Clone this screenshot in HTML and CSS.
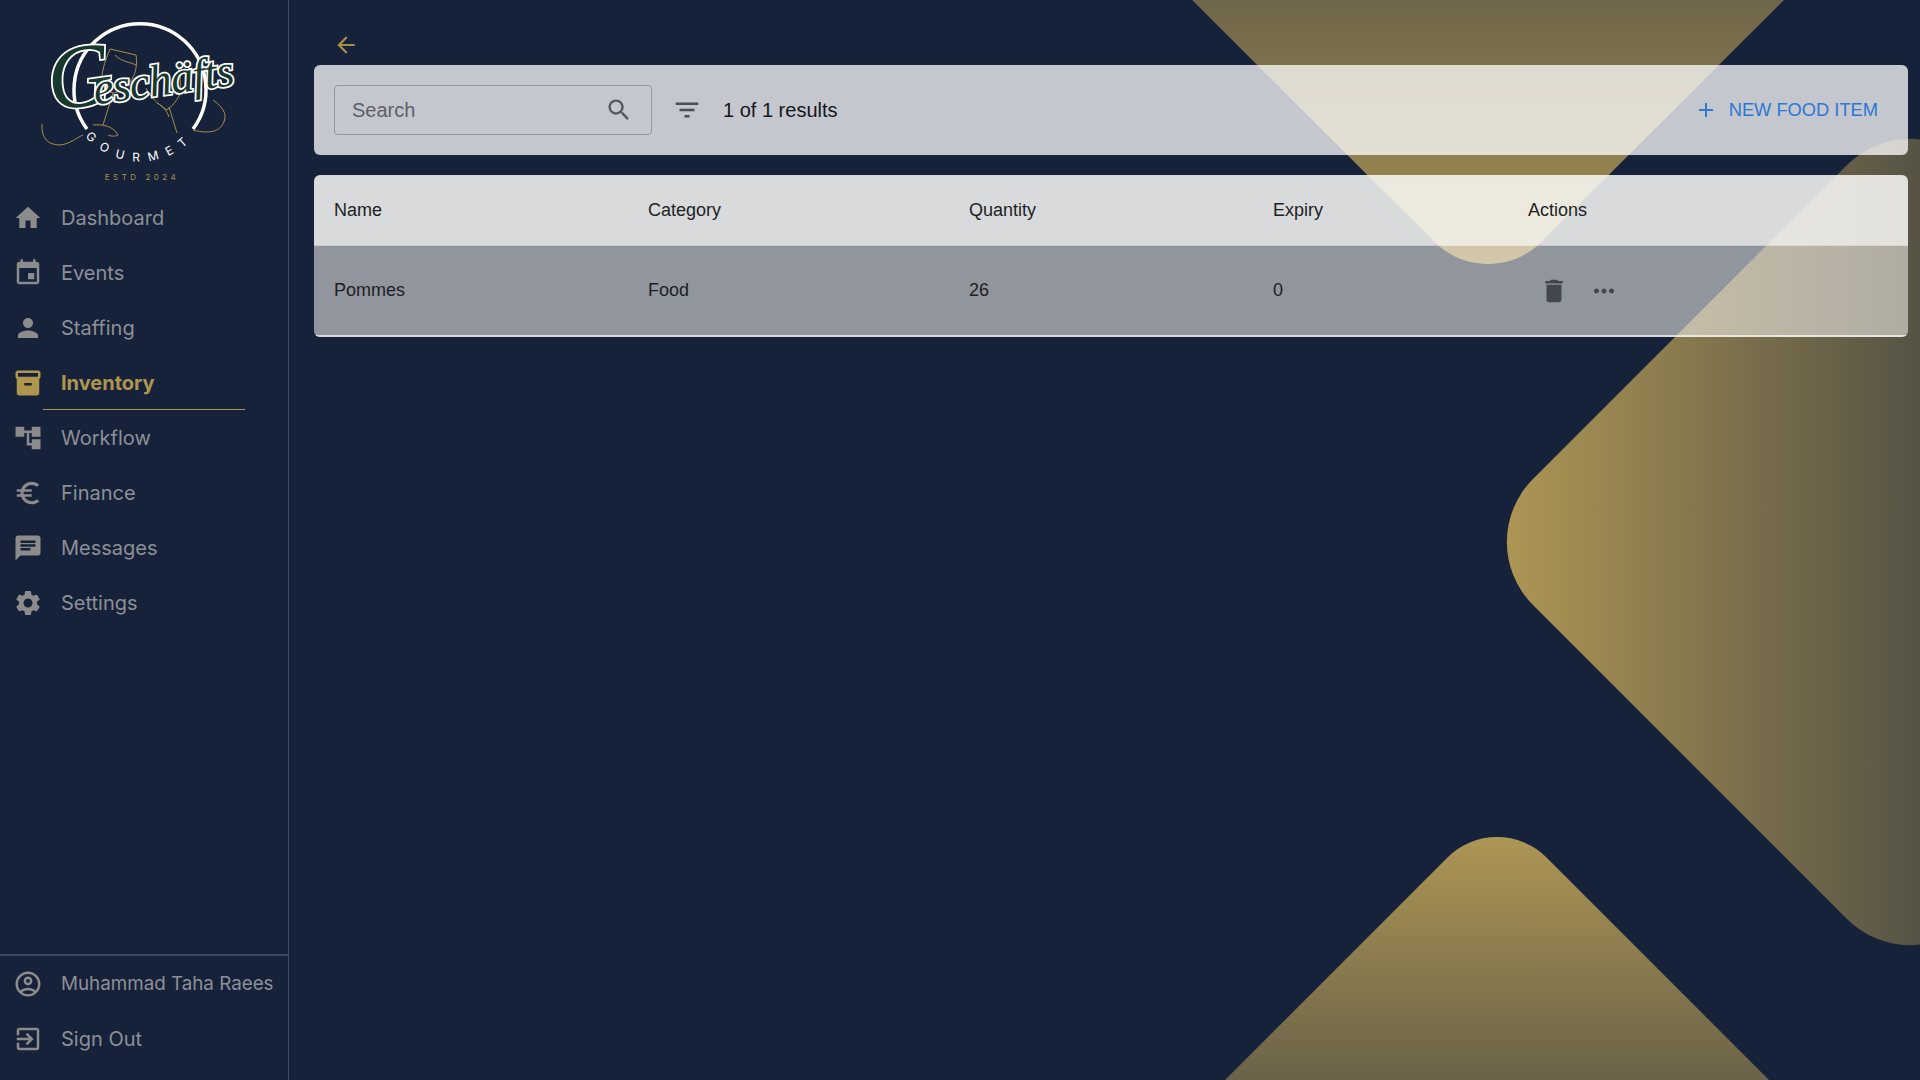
FILE: index.html
```html
<!DOCTYPE html>
<html>
<head>
    <meta charset="UTF-8">
    <link rel="stylesheet" href="styles.css">
</head>
<body>
    <!-- Background shapes -->
    <svg class="backdrop" viewBox="0 0 1920 1080">
        <defs>
            <linearGradient id="fadeTop" gradientUnits="userSpaceOnUse" x1="0" y1="290" x2="0" y2="-420">
                <stop offset="0" stop-color="#ad9554"/>
                <stop offset="1" stop-color="#ad9554" stop-opacity="0"/>
            </linearGradient>
            <linearGradient id="fadeRight" gradientUnits="userSpaceOnUse" x1="1506" y1="0" x2="2230" y2="0">
                <stop offset="0" stop-color="#ad9554"/>
                <stop offset="1" stop-color="#ad9554" stop-opacity="0"/>
            </linearGradient>
            <linearGradient id="fadeBottom" gradientUnits="userSpaceOnUse" x1="0" y1="838" x2="0" y2="1388">
                <stop offset="0" stop-color="#ad9554"/>
                <stop offset="1" stop-color="#ad9554" stop-opacity="0"/>
            </linearGradient>
        </defs>
        <path fill="url(#fadeTop)" d="M1142 -50 L1434 241.5 A76 76 0 0 0 1542 241.5 L1834 -50 Z"/>
        <path fill="url(#fadeRight)" d="M1847 165 L1533 479 A89 89 0 0 0 1533 605 L1847 919 A89 89 0 0 0 1973 919 L2287 605 A89 89 0 0 0 2287 479 L1973 165 A89 89 0 0 0 1847 165 Z"/>
        <path fill="url(#fadeBottom)" d="M1447 858 A70 70 0 0 1 1547 858 L1937 1248 L1057 1248 Z"/>
    </svg>

    <div class="app">
        <aside class="sidebar">
            <div class="logo">
                <svg class="logo-art" viewBox="0 0 288 190">
                    <defs>
                        <path id="gourmetArc" d="M67.5 89 A72.5 72.5 0 0 0 212.5 89"/>
                    </defs>
                    <path class="logo-ring" d="M87 129 A66 66 0 1 1 193 129"/>
                    <!-- glasses -->
                    <path class="logo-line" d="M110 49 L136 55 C139 72 130 90 113 93 C103 90 100 80 103 70 C105 60 108 55 110 49 Z M115 55 C122 62 130 62 136 65 M113 93 L103 125 M93 125 C103 124 113 126 118 135 C114 137 110 136 108 135"/>
                    <path class="logo-line" d="M146 88 C150 97 158 104 167 110 C175 104 181 95 180 90 C181 82 180 75 178 67 M157 103 C163 106 167 111 169 117 M169 107 L177 133"/>
                    <path class="logo-line" d="M42 124 C41 138 48 145 60 145 C70 144 76 138 83 135 M193 130 C204 133 222 135 225 118 C226 110 218 104 213 100"/>
                    <text class="logo-script" x="48" y="98" transform="rotate(-8 140 80)"><tspan class="logo-initial">G</tspan><tspan dx="-20">eschäfts</tspan></text>
                    <text class="logo-gourmet"><textPath href="#gourmetArc" startOffset="50%">GOURMET</textPath></text>
                    <text class="logo-estd" x="142" y="180">ESTD 2024</text>
                </svg>
            </div>
            <nav class="nav">
                <a class="nav-item"><svg class="nav-icon" viewBox="0 0 24 24"><path d="M10 20v-6h4v6h5v-8h3L12 3 2 12h3v8z"/></svg>Dashboard</a>
                <a class="nav-item"><svg class="nav-icon" viewBox="0 0 24 24"><path d="M17 12h-5v5h5v-5zM16 1v2H8V1H6v2H5c-1.11 0-1.99.9-1.99 2L3 19c0 1.1.89 2 2 2h14c1.1 0 2-.9 2-2V5c0-1.1-.9-2-2-2h-1V1h-2zm3 18H5V8h14v11z"/></svg>Events</a>
                <a class="nav-item"><svg class="nav-icon" viewBox="0 0 24 24"><path d="M12 12c2.21 0 4-1.79 4-4s-1.79-4-4-4-4 1.79-4 4 1.79 4 4 4zm0 2c-2.67 0-8 1.34-8 4v2h16v-2c0-2.66-5.33-4-8-4z"/></svg>Staffing</a>
                <a class="nav-item active"><svg class="nav-icon" viewBox="0 0 24 24"><path d="M20 2H4c-1 0-2 .9-2 2v3.01c0 .72.43 1.34 1 1.69V20c0 1.1 1.1 2 2 2h14c.9 0 2-.9 2-2V8.7c.57-.35 1-.97 1-1.69V4c0-1.1-1-2-2-2zm-5 12H9v-2h6v2zm5-7H4V4l16-.02V7z"/></svg>Inventory</a>
                <a class="nav-item"><svg class="nav-icon" viewBox="0 0 24 24"><path d="M22 11V3h-7v3H9V3H2v8h7V8h2v10h4v3h7v-8h-7v3h-2V8h2v3z"/></svg>Workflow</a>
                <a class="nav-item"><svg class="nav-icon" viewBox="0 0 24 24"><path d="M15 18.5c-2.51 0-4.68-1.42-5.76-3.5H15v-2H8.58c-.05-.33-.08-.66-.08-1s.03-.67.08-1H15V9H9.24C10.32 6.92 12.5 5.5 15 5.5c1.61 0 3.09.59 4.23 1.57L21 5.3C19.41 3.87 17.3 3 15 3c-3.92 0-7.24 2.51-8.48 6H3v2h3.06c-.04.33-.06.66-.06 1 0 .34.02.67.06 1H3v2h3.52c1.24 3.49 4.56 6 8.48 6 2.31 0 4.41-.87 6-2.3l-1.78-1.77c-1.13.98-2.6 1.57-4.22 1.57z"/></svg>Finance</a>
                <a class="nav-item"><svg class="nav-icon" viewBox="0 0 24 24"><path d="M20 2H4c-1.1 0-1.99.9-1.99 2L2 22l4-4h14c1.1 0 2-.9 2-2V4c0-1.1-.9-2-2-2zM6 9h12v2H6V9zm8 5H6v-2h8v2zm4-6H6V6h12v2z"/></svg>Messages</a>
                <a class="nav-item"><svg class="nav-icon" viewBox="0 0 24 24"><path d="M19.14 12.94c.04-.3.06-.61.06-.94 0-.32-.02-.64-.07-.94l2.03-1.58c.18-.14.23-.41.12-.61l-1.92-3.32c-.12-.22-.37-.29-.59-.22l-2.39.96c-.5-.38-1.03-.7-1.62-.94l-.36-2.54c-.04-.24-.24-.41-.48-.41h-3.84c-.24 0-.43.17-.47.41l-.36 2.54c-.59.24-1.13.57-1.62.94l-2.39-.96c-.22-.08-.47 0-.59.22L2.74 8.87c-.12.21-.08.47.12.61l2.03 1.58c-.05.3-.09.63-.09.94s.02.64.07.94l-2.03 1.58c-.18.14-.23.41-.12.61l1.92 3.32c.12.22.37.29.59.22l2.39-.96c.5.38 1.03.7 1.62.94l.36 2.54c.05.24.24.41.48.41h3.84c.24 0 .44-.17.47-.41l.36-2.54c.59-.24 1.13-.56 1.62-.94l2.39.96c.22.08.47 0 .59-.22l1.92-3.32c.12-.22.07-.47-.12-.61l-2.01-1.58zM12 15.6c-1.98 0-3.6-1.62-3.6-3.6s1.62-3.6 3.6-3.6 3.6 1.62 3.6 3.6-1.62 3.6-3.6 3.6z"/></svg>Settings</a>
            </nav>
            <div class="account">
                <a class="nav-item account-name"><svg class="nav-icon" viewBox="0 0 24 24"><path d="M12 2C6.48 2 2 6.48 2 12s4.48 10 10 10 10-4.48 10-10S17.52 2 12 2zM7.35 18.5C8.66 17.56 10.26 17 12 17s3.34.56 4.65 1.5c-1.31.94-2.91 1.5-4.65 1.5s-3.34-.56-4.65-1.5zm10.79-1.38C16.45 15.8 14.32 15 12 15s-4.45.8-6.14 2.12C4.7 15.73 4 13.95 4 12c0-4.42 3.58-8 8-8s8 3.58 8 8c0 1.95-.7 3.73-1.86 5.12zM12 6c-1.93 0-3.5 1.57-3.5 3.5S10.07 13 12 13s3.5-1.57 3.5-3.5S13.93 6 12 6zm0 5c-.83 0-1.5-.67-1.5-1.5S11.17 8 12 8s1.5.67 1.5 1.5S12.83 11 12 11z"/></svg>Muhammad Taha Raees</a>
                <a class="nav-item"><svg class="nav-icon" viewBox="0 0 24 24"><path d="M10.09 15.59L11.5 17l5-5-5-5-1.41 1.41L12.67 11H3v2h9.67l-2.58 2.59zM19 3H5c-1.11 0-2 .9-2 2v4h2V5h14v14H5v-4H3v4c0 1.1.89 2 2 2h14c1.1 0 2-.9 2-2V5c0-1.1-.9-2-2-2z"/></svg>Sign Out</a>
            </div>
        </aside>

        <main class="content">
            <div class="back-row">
                <svg class="back-icon" viewBox="0 0 24 24"><path d="M20 11H7.83l5.59-5.59L12 4l-8 8 8 8 1.41-1.41L7.83 13H20v-2z"/></svg>
            </div>

            <div class="toolbar">
                <div class="search">
                    <span class="search-label">Search</span>
                    <svg class="search-icon" viewBox="0 0 24 24"><path d="M15.5 14h-.79l-.28-.27C15.41 12.59 16 11.11 16 9.5 16 5.91 13.09 3 9.5 3S3 5.91 3 9.5 5.91 16 9.5 16c1.61 0 3.09-.59 4.23-1.57l.27.28v.79l5 4.99L20.49 19l-4.99-5zm-6 0C7.01 14 5 11.99 5 9.5S7.01 5 9.5 5 14 7.01 14 9.5 11.99 14 9.5 14z"/></svg>
                </div>
                <svg class="filter-icon" viewBox="0 0 24 24"><path d="M10 18h4v-2h-4v2zM3 6v2h18V6H3zm3 7h12v-2H6v2z"/></svg>
                <span class="results">1 of 1 results</span>
                <a class="new-item">
                    <svg class="add-icon" viewBox="0 0 24 24"><path d="M19 13h-6v6h-2v-6H5v-2h6V5h2v6h6v2z"/></svg>
                    NEW FOOD ITEM
                </a>
            </div>

            <div class="table">
                <div class="table-head">
                    <div>Name</div>
                    <div>Category</div>
                    <div>Quantity</div>
                    <div>Expiry</div>
                    <div>Actions</div>
                </div>
                <div class="table-row">
                    <div>Pommes</div>
                    <div>Food</div>
                    <div>26</div>
                    <div>0</div>
                    <div class="row-actions">
                        <svg class="row-icon" viewBox="0 0 24 24"><path d="M6 19c0 1.1.9 2 2 2h8c1.1 0 2-.9 2-2V7H6v12zM19 4h-3.5l-1-1h-5l-1 1H5v2h14V4z"/></svg>
                        <svg class="row-icon" viewBox="0 0 24 24"><path d="M6 10c-1.1 0-2 .9-2 2s.9 2 2 2 2-.9 2-2-.9-2-2-2zm12 0c-1.1 0-2 .9-2 2s.9 2 2 2 2-.9 2-2-.9-2-2-2zm-6 0c-1.1 0-2 .9-2 2s.9 2 2 2 2-.9 2-2-.9-2-2-2z"/></svg>
                    </div>
                </div>
            </div>
        </main>
    </div>
</body>
</html>
```

FILE: styles.css
```css
* {
    box-sizing: border-box;
}

body {
    margin: 0;
    height: 1080px;
    overflow: hidden;
    background-color: #15223a;
    font-family: "Liberation Sans", Arial, sans-serif;
}

.backdrop {
    position: absolute;
    top: 0;
    left: 0;
    width: 1920px;
    height: 1080px;
}

.app {
    position: relative;
    display: flex;
    height: 100%;
}

/* Sidebar */
.sidebar {
    display: flex;
    flex-direction: column;
    flex: 0 0 289px;
    padding-bottom: 14px;
    border-right: 1px solid rgba(255, 255, 255, 0.2);
    font-family: Inter, sans-serif;
}

.logo {
    height: 190px;
}

.logo-art {
    display: block;
    width: 288px;
    height: 190px;
}

.logo-ring {
    fill: none;
    stroke: #ffffff;
    stroke-width: 3.5;
}

.logo-line {
    fill: none;
    stroke: #a88f4e;
    stroke-width: 1;
}

.logo-script {
    font-family: "Liberation Serif", serif;
    font-style: italic;
    font-size: 45px;
    letter-spacing: -0.5px;
    fill: #17382c;
    stroke: #ffffff;
    stroke-width: 3.5px;
    paint-order: stroke;
}

.logo-initial {
    font-size: 90px;
}

.logo-gourmet {
    font-family: Inter, sans-serif;
    font-size: 12px;
    fill: #ffffff;
    letter-spacing: 9px;
    text-anchor: middle;
}

.logo-estd {
    font-family: Inter, sans-serif;
    font-size: 8px;
    fill: #a88f4e;
    letter-spacing: 3.5px;
    text-anchor: middle;
}

.nav-item {
    position: relative;
    display: flex;
    align-items: center;
    height: 55px;
    padding-left: 13px;
    font-size: 20px;
    color: #8d9096;
    white-space: nowrap;
}

.nav-icon {
    flex: 0 0 30px;
    width: 30px;
    height: 30px;
    margin-right: 18px;
    fill: #8c8c8c;
}

.nav-item.active {
    font-weight: 700;
    color: #b0954f;
}

.nav-item.active .nav-icon {
    fill: #b0954f;
}

.nav-item.active::after {
    content: "";
    position: absolute;
    left: 43px;
    bottom: 0;
    width: 202px;
    height: 1px;
    background-color: #b0954f;
}

.account {
    margin-top: auto;
    border-top: 2px solid rgba(255, 255, 255, 0.17);
}

.account-name {
    font-size: 18.8px;
}

/* Main area */
.content {
    flex: 1;
    padding: 0 12px 0 25px;
}

.back-row {
    display: flex;
    align-items: center;
    height: 65px;
    padding: 25px 0 0 19px;
}

.back-icon {
    width: 26px;
    height: 26px;
    fill: #a88f4e;
}

.toolbar {
    display: flex;
    align-items: center;
    height: 90px;
    padding: 0 30px 0 20px;
    margin-bottom: 20px;
    background-color: rgba(255, 255, 255, 0.75);
    border-radius: 6px;
}

.search {
    display: flex;
    align-items: center;
    justify-content: space-between;
    width: 318px;
    height: 50px;
    padding: 0 18px 0 17px;
    border: 1px solid #95979c;
    border-radius: 4px;
}

.search-label {
    font-size: 20px;
    color: #5d6068;
}

.search-icon {
    width: 28px;
    height: 28px;
    fill: #55585e;
}

.filter-icon {
    width: 30px;
    height: 30px;
    margin: 0 21px 0 20px;
    fill: #4b4e55;
}

.results {
    font-size: 20px;
    color: #14161c;
}

.new-item {
    display: flex;
    align-items: center;
    margin-left: auto;
    font-size: 18.3px;
    color: #2d78d6;
}

.add-icon {
    width: 24px;
    height: 24px;
    margin-right: 11px;
    fill: #2d78d6;
}

.table {
    border-radius: 6px;
    overflow: hidden;
    font-size: 18px;
    color: #1d1f24;
}

.table-head,
.table-row {
    display: grid;
    grid-template-columns: 314px 321px 304px 255px 1fr;
    align-items: center;
}

.table-head > div,
.table-row > div {
    padding-left: 20px;
}

.table-head {
    height: 70px;
    background-color: rgba(250, 250, 248, 0.85);
}

.table-row {
    height: 92px;
    border-top: 1px solid rgba(255, 255, 255, 0.5);
    border-bottom: 2px solid rgba(255, 255, 255, 0.65);
    background-color: rgba(247, 244, 240, 0.55);
}

.table-row > .row-actions {
    display: flex;
    align-items: center;
    gap: 20px;
    padding-left: 31px;
}

.row-icon {
    width: 30px;
    height: 30px;
    fill: #44464d;
}
```
